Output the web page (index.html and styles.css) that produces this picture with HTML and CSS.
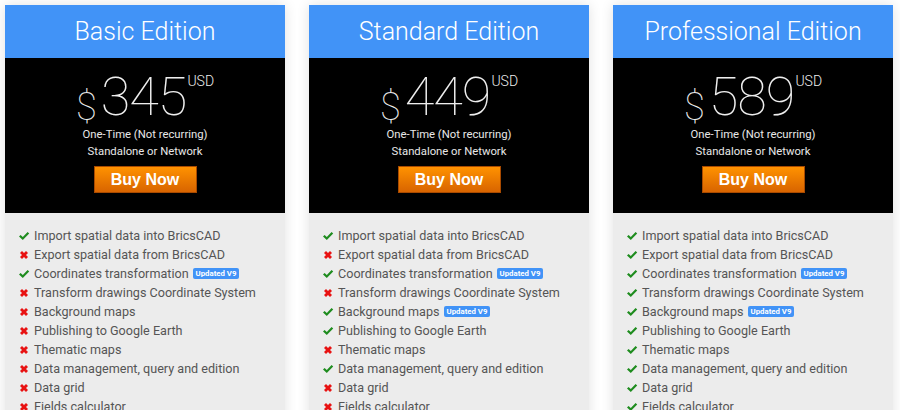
FILE: index.html
```html
<!DOCTYPE html>
<html>
<head>
<meta charset="utf-8">
<link rel="stylesheet" href="styles.css">
</head>
<body>
<svg width="0" height="0" class="defs">
  <defs>
    <symbol id="ok" viewBox="0 0 12 12"><path d="M1 6.4 L2.6 4.9 L4.8 7 L9.6 2 L11.2 3.5 L4.8 10 Z" fill="#1e8c1e"/></symbol>
    <symbol id="no" viewBox="0 0 12 12"><path d="M2 4 L4 2 L6 4 L8 2 L10 4 L8 6 L10 8 L8 10 L6 8 L4 10 L2 8 L4 6 Z" fill="#e81212"/></symbol>
  </defs>
</svg>
<div class="plans">
  <div class="card">
    <div class="head">Basic Edition</div>
    <div class="price-box">
      <div class="price"><span class="cur">$</span><span class="amt">345</span><span class="usd">USD</span></div>
      <div class="note">One-Time (Not recurring)</div>
      <div class="note">Standalone or Network</div>
      <a class="buy">Buy Now</a>
    </div>
    <ul class="features">
      <li><svg class="ic"><use href="#ok"/></svg>Import spatial data into BricsCAD</li>
      <li><svg class="ic"><use href="#no"/></svg>Export spatial data from BricsCAD</li>
      <li><svg class="ic"><use href="#ok"/></svg>Coordinates transformation <span class="badge">Updated V9</span></li>
      <li><svg class="ic"><use href="#no"/></svg>Transform drawings Coordinate System</li>
      <li><svg class="ic"><use href="#no"/></svg>Background maps</li>
      <li><svg class="ic"><use href="#no"/></svg>Publishing to Google Earth</li>
      <li><svg class="ic"><use href="#no"/></svg>Thematic maps</li>
      <li><svg class="ic"><use href="#no"/></svg>Data management, query and edition</li>
      <li><svg class="ic"><use href="#no"/></svg>Data grid</li>
      <li><svg class="ic"><use href="#no"/></svg>Fields calculator</li>
    </ul>
  </div>
  <div class="card">
    <div class="head">Standard Edition</div>
    <div class="price-box">
      <div class="price"><span class="cur">$</span><span class="amt">449</span><span class="usd">USD</span></div>
      <div class="note">One-Time (Not recurring)</div>
      <div class="note">Standalone or Network</div>
      <a class="buy">Buy Now</a>
    </div>
    <ul class="features">
      <li><svg class="ic"><use href="#ok"/></svg>Import spatial data into BricsCAD</li>
      <li><svg class="ic"><use href="#no"/></svg>Export spatial data from BricsCAD</li>
      <li><svg class="ic"><use href="#ok"/></svg>Coordinates transformation <span class="badge">Updated V9</span></li>
      <li><svg class="ic"><use href="#no"/></svg>Transform drawings Coordinate System</li>
      <li><svg class="ic"><use href="#ok"/></svg>Background maps <span class="badge">Updated V9</span></li>
      <li><svg class="ic"><use href="#ok"/></svg>Publishing to Google Earth</li>
      <li><svg class="ic"><use href="#no"/></svg>Thematic maps</li>
      <li><svg class="ic"><use href="#ok"/></svg>Data management, query and edition</li>
      <li><svg class="ic"><use href="#no"/></svg>Data grid</li>
      <li><svg class="ic"><use href="#no"/></svg>Fields calculator</li>
    </ul>
  </div>
  <div class="card">
    <div class="head">Professional Edition</div>
    <div class="price-box">
      <div class="price"><span class="cur">$</span><span class="amt">589</span><span class="usd">USD</span></div>
      <div class="note">One-Time (Not recurring)</div>
      <div class="note">Standalone or Network</div>
      <a class="buy">Buy Now</a>
    </div>
    <ul class="features">
      <li><svg class="ic"><use href="#ok"/></svg>Import spatial data into BricsCAD</li>
      <li><svg class="ic"><use href="#ok"/></svg>Export spatial data from BricsCAD</li>
      <li><svg class="ic"><use href="#ok"/></svg>Coordinates transformation <span class="badge">Updated V9</span></li>
      <li><svg class="ic"><use href="#ok"/></svg>Transform drawings Coordinate System</li>
      <li><svg class="ic"><use href="#ok"/></svg>Background maps <span class="badge">Updated V9</span></li>
      <li><svg class="ic"><use href="#ok"/></svg>Publishing to Google Earth</li>
      <li><svg class="ic"><use href="#ok"/></svg>Thematic maps</li>
      <li><svg class="ic"><use href="#ok"/></svg>Data management, query and edition</li>
      <li><svg class="ic"><use href="#ok"/></svg>Data grid</li>
      <li><svg class="ic"><use href="#ok"/></svg>Fields calculator</li>
    </ul>
  </div>
</div>
</body>
</html>
```
FILE: styles.css
```css
html, body {
  margin: 0;
  padding: 0;
  background: #fff;
  font-family: Roboto, "Liberation Sans", sans-serif;
  overflow: hidden;
}
.defs { position: absolute; }
.plans {
  display: flex;
  gap: 24px;
  padding: 5px 0 0 5px;
}
.card {
  width: 280px;
  flex: none;
  background: #ececec;
  box-shadow: 0 0 12px rgba(0,0,0,0.12);
  height: 420px;
}
.head {
  background: #4193f7;
  color: #fff;
  font-weight: 300;
  font-size: 25px;
  height: 53px;
  line-height: 54px;
  text-align: center;
}
.price-box {
  background: #000;
  height: 155px;
  box-sizing: border-box;
  padding-top: 12px;
  text-align: center;
  color: #e6e6e6;
}
.price {
  display: flex;
  justify-content: center;
  align-items: flex-start;
  color: #eee;
  font-weight: 100;
  height: 56px;
}
.cur {
  font-size: 38px;
  line-height: 38px;
  margin-top: 18px;
  margin-right: 4px;
}
.amt {
  font-size: 54px;
  line-height: 54px;
  letter-spacing: -1px;
}
.usd {
  font-size: 14px;
  font-weight: 300;
  line-height: 14px;
  margin-top: 4px;
  margin-left: 1px;
}
.note {
  font-size: 11.3px;
  line-height: 17px;
  color: #e8e8e8;
}
.note:first-of-type { margin-top: 4px; }
.buy {
  display: inline-block;
  margin-top: 6px;
  width: 103px;
  height: 27px;
  box-sizing: border-box;
  line-height: 25px;
  border: 1px solid #a84a00;
  background: linear-gradient(#ff9200, #d86400);
  color: #fff;
  font-family: "Liberation Sans", Arial, sans-serif;
  font-weight: bold;
  font-size: 16px;
}
.features {
  list-style: none;
  margin: 0;
  padding: 13px 0 0 13px;
}
.features li {
  display: flex;
  align-items: center;
  height: 19px;
  font-size: 12.6px;
  color: #555;
  white-space: nowrap;
}
.ic {
  width: 12px;
  height: 12px;
  margin-right: 4px;
  flex: none;
}
.badge {
  display: inline-block;
  background: #4193f7;
  color: #fff;
  font-size: 7.8px;
  font-weight: bold;
  line-height: 11px;
  padding: 0 3px;
  border-radius: 2px;
  margin-left: 4px;
}
```
